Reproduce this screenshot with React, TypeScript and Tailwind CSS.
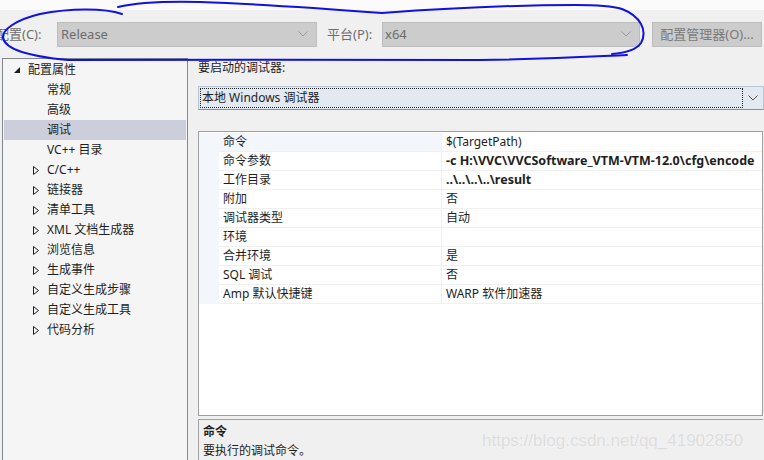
import React from "react";

const FONT = { fontFamily: '"Noto Sans", "Noto Sans CJK SC", sans-serif' };

type TreeItem = { label: string; level: 0 | 1; expanded?: boolean; arrow?: boolean; selected?: boolean };

const tree: TreeItem[] = [
  { label: "配置属性", level: 0, expanded: true },
  { label: "常规", level: 1 },
  { label: "高级", level: 1 },
  { label: "调试", level: 1, selected: true },
  { label: "VC++ 目录", level: 1 },
  { label: "C/C++", level: 1, arrow: true },
  { label: "链接器", level: 1, arrow: true },
  { label: "清单工具", level: 1, arrow: true },
  { label: "XML 文档生成器", level: 1, arrow: true },
  { label: "浏览信息", level: 1, arrow: true },
  { label: "生成事件", level: 1, arrow: true },
  { label: "自定义生成步骤", level: 1, arrow: true },
  { label: "自定义生成工具", level: 1, arrow: true },
  { label: "代码分析", level: 1, arrow: true },
];

type Prop = { name: string; value: string; bold?: boolean; selected?: boolean };
const props: Prop[] = [
  { name: "命令", value: "$(TargetPath)", selected: true },
  { name: "命令参数", value: "-c H:\\VVC\\VVCSoftware_VTM-VTM-12.0\\cfg\\encode", bold: true },
  { name: "工作目录", value: "..\\..\\..\\..\\result", bold: true },
  { name: "附加", value: "否" },
  { name: "调试器类型", value: "自动" },
  { name: "环境", value: "" },
  { name: "合并环境", value: "是" },
  { name: "SQL 调试", value: "否" },
  { name: "Amp 默认快捷键", value: "WARP 软件加速器" },
];

function Chevron({ color = "#8a8a8a" }: { color?: string }) {
  return (
    <svg width="10" height="6" viewBox="0 0 10 6">
      <polyline points="0.5,0.5 5,5 9.5,0.5" fill="none" stroke={color} strokeWidth="1" />
    </svg>
  );
}

function ExpandedArrow() {
  return (
    <svg width="6" height="6" viewBox="0 0 6 6">
      <polygon points="6,0 6,6 0,6" fill="#1e1e1e" />
    </svg>
  );
}

function CollapsedArrow() {
  return (
    <svg width="6" height="9" viewBox="0 0 6 9">
      <polygon points="0.5,0.5 5.5,4.5 0.5,8.5" fill="none" stroke="#1e1e1e" strokeWidth="1" />
    </svg>
  );
}

export default function App() {
  return (
    <div
      className="relative w-[764px] h-[460px] overflow-hidden bg-[#f0f0f0] text-[12px] text-[#1e1e1e] leading-[16px]"
      style={FONT}
    >
      {/* top strip */}
      <div className="h-[10px] bg-[#fbfbfb]" />
      {/* toolbar */}
      <div className="h-[48px] flex items-center">
        <span className="-ml-[4px] w-[61px] text-[#6d6d6d] text-[13px] whitespace-nowrap">配置(C):</span>
        <div className="w-[260px] h-[25px] bg-[#cccccc] border border-[#bdbdbd] flex items-center justify-between pl-[3px] pr-[8px] text-[#6d6d6d] text-[13px]">
          <span>Release</span>
          <Chevron color="#9a9a9a" />
        </div>
        <span className="ml-[10px] w-[55px] text-[#6d6d6d] text-[13px] whitespace-nowrap">平台(P):</span>
        <div className="w-[258px] h-[25px] bg-[#cccccc] border border-[#bdbdbd] flex items-center justify-between pl-[2px] pr-[8px] text-[#6d6d6d] text-[13px]">
          <span>x64</span>
          <Chevron color="#9a9a9a" />
        </div>
        <div className="ml-[12px] w-[110px] h-[25px] bg-[#cccccc] border border-[#bdbdbd] flex items-center justify-center text-[#7a7a7a] text-[13px] whitespace-nowrap">
          配置管理器(O)...
        </div>
      </div>

      {/* main */}
      <div className="flex h-[402px]">
        {/* tree */}
        <div className="ml-[2px] w-[186px] h-[410px] border border-[#828790] bg-[#f5f5f5] pt-[1px]">
          {tree.map((t) => (
            <div
              key={t.label}
              className={`h-[20px] mx-[1px] flex items-center whitespace-nowrap ${t.selected ? "bg-[#cccedb]" : ""}`}
            >
              {t.level === 0 ? (
                <>
                  <span className="ml-[10px] w-[14px] flex items-center">
                    <ExpandedArrow />
                  </span>
                  <span>{t.label}</span>
                </>
              ) : (
                <>
                  <span className="ml-[29px] w-[14px] flex items-center">{t.arrow ? <CollapsedArrow /> : null}</span>
                  <span>{t.label}</span>
                </>
              )}
            </div>
          ))}
        </div>

        {/* right */}
        <div className="ml-[10px] flex-1 flex flex-col">
          <div className="h-[18px] pt-[2px] leading-[16px]">要启动的调试器:</div>
          <div className="mt-[10px] h-[24px] w-[566px] bg-[#e3e9f0] border border-[#b9c6d3] border-b-[#5b9bd5] flex items-center">
            <div className="ml-[1px] h-[20px] w-[543px] border border-dotted border-[#222] flex items-center">
              <span className="pl-[1px]">本地 Windows 调试器</span>
            </div>
            <div className="flex-1 flex items-center justify-center">
              <Chevron color="#555" />
            </div>
          </div>

          {/* property grid */}
          <div className="mt-[21px] w-[565px] h-[285px] border border-[#a0a0a0] bg-white pt-[1px]">
            {props.map((p) => (
              <div key={p.name} className="flex h-[19px]">
                <div className="w-[20px] bg-[#f3f7fc]" />
                <div
                  className={`w-[222px] border-b border-[#f0f0f0] pl-[4px] flex items-center whitespace-nowrap ${p.selected ? "bg-[#f3f7fc]" : ""}`}
                >
                  {p.name}
                </div>
                <div
                  className={`flex-1 border-l border-b border-[#f0f0f0] pl-[4px] flex items-center whitespace-nowrap overflow-hidden ${p.bold ? "font-bold text-[12.5px]" : ""}`}
                >
                  {p.value}
                </div>
              </div>
            ))}
          </div>

          {/* description */}
          <div className="mt-[3px] w-[565px] flex-1 border-t border-l border-[#a0a0a0] pl-[4px] pt-[2px]">
            <div className="font-bold leading-[19px]">命令</div>
            <div className="leading-[19px]">要执行的调试命令。</div>
          </div>
        </div>
      </div>

      {/* watermark */}
      <div
        className="absolute left-[482px] top-[431px] text-[17px] leading-[20px] text-[#dcdcdc] whitespace-nowrap"
        style={{ fontFamily: '"Liberation Sans", Arial, sans-serif', textShadow: "0 0 1px #ffffff" }}
      >
        https://blog.csdn.net/qq_41902850
      </div>

      {/* blue hand-drawn annotation */}
      <svg className="absolute left-0 top-0 pointer-events-none" width="764" height="70" viewBox="0 0 764 70">
        <path
          d="M122,14 C105,8 70,8 40,14 C15,20 2,30 3,38 C5,48 25,56 68,60 C200,60 350,59 480,60 C560,59 600,56 627,55"
          fill="none"
          stroke="#1010e0"
          strokeWidth="2"
          strokeLinecap="round"
        />
        <path
          d="M118,7 C135,3 160,1 200,2 C260,4 330,9 382,13 C450,8 520,5 575,5 C600,5 612,6 622,9 C640,16 648,30 641,43 C636,50 625,53 612,54"
          fill="none"
          stroke="#1010e0"
          strokeWidth="2"
          strokeLinecap="round"
        />
      </svg>
    </div>
  );
}
